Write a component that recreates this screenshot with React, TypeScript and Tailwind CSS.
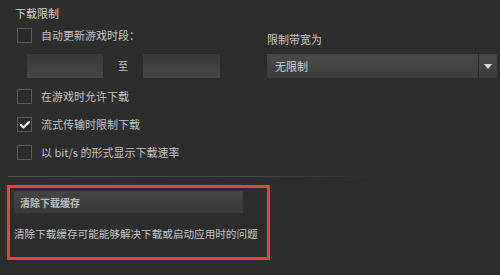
import { Check } from 'lucide-react'

const font = { fontFamily: '"Noto Sans CJK SC", "Liberation Sans", sans-serif' }

function Box({ checked }: { checked?: boolean }) {
  return (
    <span className="flex h-[15px] w-[15px] shrink-0 items-center justify-center border border-[#5c5c5c] bg-[#2a2a2a]">
      {checked && <Check className="h-[12px] w-[12px] text-white" strokeWidth={4} />}
    </span>
  )
}

function Row({ label, checked }: { label: string; checked?: boolean }) {
  return (
    <label className="flex h-[15px] items-center gap-[9px] pl-[17px]">
      <Box checked={checked} />
      <span className="text-[11px] leading-none text-[#c4c4c4]">{label}</span>
    </label>
  )
}

export default function App() {
  return (
    <div className="h-[275px] w-[500px] overflow-hidden bg-[#2d2d2d]" style={font}>
      <div className="pl-[15px] pt-[7px] text-[11px] leading-[13px] text-[#d0d0d0]">下载限制</div>

      <div className="mt-[8px] flex">
        <div className="w-[250px]">
          <Row label="自动更新游戏时段：" />
          <div className="mt-[10px] flex items-center pl-[27px]">
            <div className="h-[25px] w-[76px] bg-gradient-to-b from-[#3a3a3a] to-[#474747] shadow-[inset_0_1px_0_#2a2a2a]" />
            <span className="w-[40px] text-center text-[10px] text-[#c4c4c4]">至</span>
            <div className="h-[25px] w-[77px] bg-gradient-to-b from-[#3a3a3a] to-[#474747] shadow-[inset_0_1px_0_#2a2a2a]" />
          </div>
        </div>
        <div className="flex-1 pl-[17px] pt-[6px]">
          <div className="text-[11px] leading-none text-[#c4c4c4]">限制带宽为</div>
          <div className="mt-[9px] flex h-[24px] w-[230px] items-center bg-gradient-to-b from-[#4a4a4a] to-[#3c3c3c]">
            <span className="flex-1 pl-[8px] text-[11px] text-[#d0d0d0]">无限制</span>
            <span className="h-full w-px bg-[#2c2c2c]" />
            <span className="flex h-full w-[18px] items-center justify-center">
              <svg width="8" height="5" viewBox="0 0 8 5">
                <path d="M0 0h8L4 5z" fill="#e0e0e0" />
              </svg>
            </span>
          </div>
        </div>
      </div>

      <div className="mt-[11px] flex flex-col gap-[13px]">
        <Row label="在游戏时允许下载" />
        <Row label="流式传输时限制下载" checked />
        <Row label="以 bit/s 的形式显示下载速率" />
      </div>

      <div className="ml-[8px] mt-[16px] h-px w-[380px] bg-gradient-to-r from-[#555] via-[#4f4f4f] to-transparent" />

      <div className="ml-[7px] mt-[8px] h-[75px] w-[263px] border-[3px] border-[#e24444] px-[4px] pt-[3px]">
        <button className="flex h-[22px] w-[229px] items-center bg-gradient-to-b from-[#444] to-[#3a3a3a] pl-[6px] text-[10px] font-bold text-[#bdbdbd]">
          清除下载缓存
        </button>
        <div className="mt-[16px] whitespace-nowrap text-[10.6px] leading-none text-[#c4c4c4]">
          清除下载缓存可能能够解决下载或启动应用时的问题
        </div>
      </div>
    </div>
  )
}
